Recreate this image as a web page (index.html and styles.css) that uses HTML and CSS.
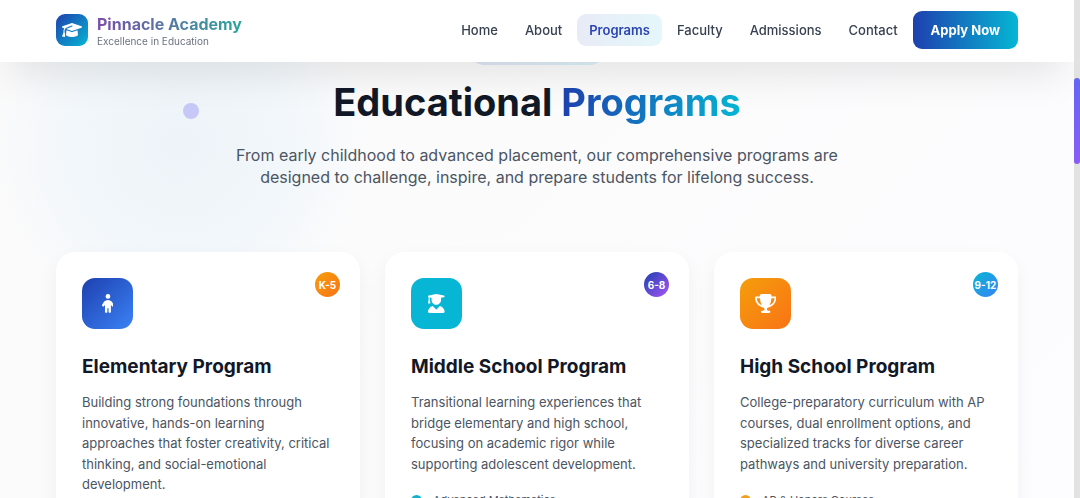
FILE: index.html
```html
<!DOCTYPE html>
<html lang="en">
<head>
<meta charset="utf-8">
<meta name="viewport" content="width=device-width, initial-scale=1">
<title>Pinnacle Academy</title>
<link rel="stylesheet" href="styles.css">
</head>
<body>
<div class="shell">
  <div class="page">
    <header class="header">
      <div class="container header-inner">
        <a class="brand" href="#">
          <span class="brand-mark">
            <svg class="brand-icon" viewBox="0 0 640 512" aria-hidden="true"><path d="M320 32c-8.100 0-16.100 1.400-23.700 4.100L15.800 137.400C6.300 140.900 0 149.900 0 160s6.300 19.100 15.800 22.600l57.900 20.900C57.300 229.300 48 259.800 48 291.900v28.100c0 28.400-10.800 57.700-22.300 80.800c-6.500 13-13.900 25.800-22.500 37.600C0 442.700-.9 448.300 .9 453.400s6 8.900 11.200 10.200l64 16c4.200 1.100 8.700 .3 12.400-2s6.300-6.100 7.100-10.400c8.600-42.800 4.300-81.200-2.100-108.700C90.300 344.300 86 329.800 80 316.500V291.900c0-30.200 10.200-58.700 27.900-81.500c12.900-15.500 29.600-28 49.200-35.700l157-61.700c8.200-3.200 17.500 .8 20.700 9s-.8 17.500-9 20.700l-157 61.700c-12.400 4.900-23.300 12.400-32.200 21.600l159.600 57.600c7.600 2.700 15.600 4.100 23.700 4.100s16.100-1.400 23.700-4.100L624.200 182.600c9.500-3.400 15.800-12.500 15.800-22.600s-6.300-19.100-15.800-22.600L343.700 36.100C336.100 33.400 328.100 32 320 32zM128 408c0 35.300 86 72 192 72s192-36.700 192-72L496.700 262.600 354.500 314c-11.100 4-22.800 6-34.500 6s-23.500-2-34.500-6L143.300 262.600 128 408z"/></svg>
          </span>
          <span class="brand-text">
            <span class="brand-name">Pinnacle Academy</span>
            <span class="brand-tagline">Excellence in Education</span>
          </span>
        </a>
        <nav class="nav" aria-label="Main">
          <a class="nav-link" href="#">Home</a>
          <a class="nav-link" href="#">About</a>
          <a class="nav-link active" href="#" aria-current="page">Programs</a>
          <a class="nav-link" href="#">Faculty</a>
          <a class="nav-link" href="#">Admissions</a>
          <a class="nav-link" href="#">Contact</a>
          <a class="apply" href="#">Apply Now</a>
        </nav>
      </div>
    </header>

    <main class="programs">
      <div class="glow" aria-hidden="true"></div>
      <div class="particle" aria-hidden="true"></div>
      <div class="container">
        <div class="intro">
          <div class="pill"></div>
          <h1 class="headline">Educational <span class="headline-accent">Programs</span></h1>
          <p class="lead">From early childhood to advanced placement, our comprehensive programs are designed to challenge, inspire, and prepare students for lifelong success.</p>
        </div>

        <div class="cards">
          <article class="card">
            <div class="card-top">
              <div class="card-icon blue"><svg class="glyph" viewBox="0 0 320 512" aria-hidden="true"><path d="M96 64a64 64 0 1 1 128 0A64 64 0 1 1 96 64zm48 320v96c0 17.700-14.300 32-32 32s-32-14.300-32-32V287.800L59.100 321c-9.400 15-29.200 19.400-44.100 10S-4.500 301.900 4.900 287l39.900-63.300C69.700 184 113.200 160 160 160s90.300 24 115.200 63.600L315.100 287c9.400 15 4.900 34.700-10 44.100s-34.700 4.900-44.100-10L240 287.800V480c0 17.700-14.300 32-32 32s-32-14.300-32-32V384H144z"/></svg></div>
              <span class="grade grade-orange">K-5</span>
            </div>
            <h2 class="card-title">Elementary Program</h2>
            <p class="card-text">Building strong foundations through innovative, hands-on learning approaches that foster creativity, critical thinking, and social-emotional development.</p>
          </article>

          <article class="card">
            <div class="card-top">
              <div class="card-icon cyan"><svg class="glyph" viewBox="0 0 448 512" aria-hidden="true"><path d="M219.300 .5c3.100-.6 6.300-.6 9.400 0l200 40C439.900 42.700 448 52.600 448 64s-8.100 21.300-19.300 23.500L352 102.900V160c0 70.700-57.300 128-128 128s-128-57.300-128-128V102.900L48 93.300v65.100l15.700 78.400c.9 4.700-.3 9.600-3.300 13.300s-7.600 5.900-12.400 5.900H16c-4.800 0-9.300-2.100-12.400-5.900s-4.300-8.600-3.300-13.300L16 158.400V86.600C6.500 83.300 0 74.300 0 64C0 52.600 8.100 42.700 19.300 40.500l200-40zM111.900 327.700c10.500-3.400 21.800 .4 29.400 8.500l71 75.500c6.300 6.700 17 6.700 23.300 0l71-75.500c7.600-8.100 18.900-11.900 29.400-8.500C401 348.600 448 409.400 448 481.300c0 17-13.800 30.700-30.700 30.700H30.700C13.800 512 0 498.200 0 481.300c0-71.900 47-132.700 111.900-153.600z"/></svg></div>
              <span class="grade grade-violet">6-8</span>
            </div>
            <h2 class="card-title">Middle School Program</h2>
            <p class="card-text">Transitional learning experiences that bridge elementary and high school, focusing on academic rigor while supporting adolescent development.</p>
            <ul class="features">
              <li class="feature"><span class="bullet bullet-cyan"></span>Advanced Mathematics</li>
            </ul>
          </article>

          <article class="card">
            <div class="card-top">
              <div class="card-icon orange"><svg class="glyph" viewBox="0 0 576 512" aria-hidden="true"><path d="M400 0H176c-26.500 0-48.100 21.800-47.100 48.200c.2 5.300 .4 10.600 .7 15.800H24C10.700 64 0 74.700 0 88c0 92.600 33.500 157 78.500 200.700c44.300 43.100 98.300 64.800 138.100 75.800c23.400 6.500 39.400 26 39.400 45.600c0 20.900-17 37.900-37.900 37.900H192c-17.700 0-32 14.300-32 32s14.300 32 32 32H384c17.700 0 32-14.300 32-32s-14.300-32-32-32H357.900C337 448 320 431 320 410.100c0-19.600 15.900-39.200 39.400-45.600c39.900-11 93.900-32.700 138.200-75.800C542.500 245 576 180.600 576 88c0-13.300-10.700-24-24-24H446.400c.3-5.200 .5-10.400 .7-15.800C448.100 21.800 426.500 0 400 0zM48.900 112h84.400c9.100 90.100 29.200 150.300 51.900 190.600c-24.900-11-50.800-26.500-73.200-48.300c-32-31.100-58-76-63-142.300zM464.100 254.300c-22.400 21.800-48.300 37.300-73.200 48.300c22.700-40.300 42.800-100.500 51.900-190.600h84.400c-5.100 66.300-31.100 111.200-63 142.300z"/></svg></div>
              <span class="grade grade-sky">9-12</span>
            </div>
            <h2 class="card-title">High School Program</h2>
            <p class="card-text">College-preparatory curriculum with AP courses, dual enrollment options, and specialized tracks for diverse career pathways and university preparation.</p>
            <ul class="features">
              <li class="feature"><span class="bullet bullet-amber"></span>AP &amp; Honors Courses</li>
            </ul>
          </article>
        </div>
      </div>
    </main>
  </div>
  <div class="rail" aria-hidden="true"><div class="thumb"></div></div>
</div>
</body>
</html>
```
FILE: styles.css
```css
* {
  box-sizing: border-box;
}

body {
  margin: 0;
  font-family: Inter, "Liberation Sans", sans-serif;
  color: #4b5563;
}

.shell {
  display: grid;
  grid-template-columns: 1fr 6px;
  height: 100vh;
  overflow: hidden;
}

.page {
  overflow: hidden;
  background: linear-gradient(135deg, #fafafa, #fdfdff);
}

.container {
  padding: 0 56px;
}

/* Header */
.header {
  position: sticky;
  top: 0;
  z-index: 5;
  background: #fff;
  box-shadow: 0 20px 40px -10px rgba(0, 0, 0, 0.11);
}

.header-inner {
  display: flex;
  align-items: center;
  justify-content: space-between;
  padding-top: 11px;
  padding-bottom: 13px;
}

.brand {
  display: flex;
  align-items: center;
  gap: 9px;
  text-decoration: none;
}

.brand-mark {
  display: grid;
  place-items: center;
  width: 32px;
  height: 32px;
  border-radius: 9px;
  background: linear-gradient(135deg, #1e40af, #06b6d4);
}

.brand-icon {
  width: 20px;
  height: 16px;
  fill: #fff;
}

.brand-text {
  display: grid;
  gap: 1px;
}

.brand-name {
  font-size: 16px;
  line-height: 20px;
  font-weight: 700;
  color: transparent;
  background: linear-gradient(90deg, #7c4dab, #2ba59b);
  background-clip: text;
  -webkit-background-clip: text;
}

.brand-tagline {
  font-size: 10px;
  line-height: 12px;
  color: #6b7280;
}

.nav {
  display: flex;
  align-items: center;
  gap: 3px;
  font-size: 13px;
}

.nav-link {
  padding: 8px 12px;
  border-radius: 9px;
  line-height: 16px;
  font-weight: 500;
  color: #374151;
  text-decoration: none;
}

.nav-link.active {
  font-weight: 600;
  color: #2b45b2;
  background: linear-gradient(90deg, #e8ebf6, #e5f7fb);
}

.apply {
  padding: 11px 18px;
  border-radius: 9px;
  line-height: 16px;
  font-weight: 700;
  color: #fff;
  text-decoration: none;
  background: linear-gradient(90deg, #1e40af, #06b6d4);
}

/* Section */
.programs {
  position: relative;
}

.glow {
  position: absolute;
  top: -102px;
  left: -5px;
  width: 370px;
  height: 370px;
  border-radius: 50%;
  background: radial-gradient(closest-side, #edf3f8, #f2f7fb 60%, rgba(250, 251, 252, 0));
}

.particle {
  position: absolute;
  top: 41px;
  left: 183px;
  width: 16px;
  height: 16px;
  border-radius: 50%;
  background: #c7c8f7;
}

.intro {
  position: relative;
  display: flex;
  flex-direction: column;
  align-items: center;
  text-align: center;
}

.pill {
  width: 134px;
  height: 28px;
  margin-top: -25px;
  border-radius: 14px;
  background: linear-gradient(90deg, #dfe5f4, #dcf2f8);
}

.headline {
  margin: 13px 0 18px;
  font-size: 38px;
  line-height: 48px;
  font-weight: 700;
  color: #111827;
}

.headline-accent {
  color: transparent;
  background: linear-gradient(90deg, #1e40af, #06b6d4);
  background-clip: text;
  -webkit-background-clip: text;
}

.lead {
  max-width: 608px;
  margin: 0 0 64px;
  font-size: 16px;
  line-height: 22px;
}

/* Cards */
.cards {
  position: relative;
  display: grid;
  grid-template-columns: repeat(3, 1fr);
  gap: 25px;
}

.card {
  padding: 26px;
  border-radius: 19px;
  background: #fff;
  box-shadow: 0 8px 20px rgba(17, 24, 39, 0.05);
}

.card-top {
  position: relative;
}

.card-icon {
  display: grid;
  place-items: center;
  width: 51px;
  height: 51px;
  border-radius: 13px;
}

.blue {
  background: linear-gradient(135deg, #1e40af, #3b82f6);
}

.cyan {
  background: #06b6d4;
}

.orange {
  background: linear-gradient(135deg, #f59e0b, #f97316);
}

.glyph {
  height: 19px;
  fill: #fff;
}

.grade {
  position: absolute;
  top: -6px;
  right: -6px;
  display: grid;
  place-items: center;
  width: 25px;
  height: 25px;
  border-radius: 50%;
  font-size: 10px;
  font-weight: 700;
  white-space: nowrap;
  color: #fff;
}

.grade-orange {
  background: linear-gradient(135deg, #f59e0b, #f97316);
}

.grade-violet {
  background: linear-gradient(135deg, #1e40af, #a855f7);
}

.grade-sky {
  background: linear-gradient(135deg, #06b6d4, #3b82f6);
}

.card-title {
  margin: 25px 0 13px;
  font-size: 19px;
  line-height: 25px;
  font-weight: 700;
  color: #111827;
}

.card-text {
  margin: 0;
  font-size: 13px;
  line-height: 1.58;
}

.features {
  margin: 17px 0 0;
  padding: 0;
  list-style: none;
}

.feature {
  display: flex;
  align-items: center;
  gap: 11px;
  font-size: 11px;
  line-height: 18px;
}

.bullet {
  width: 11px;
  height: 11px;
  border-radius: 50%;
}

.bullet-cyan {
  background: #14afc9;
}

.bullet-amber {
  background: #f0a01f;
}

/* Scroll rail */
.rail {
  padding-top: 78px;
  background: #e2e2e2;
}

.thumb {
  height: 86px;
  border-radius: 3px;
  background: linear-gradient(#6366f1, #8b5cf6);
}
```
